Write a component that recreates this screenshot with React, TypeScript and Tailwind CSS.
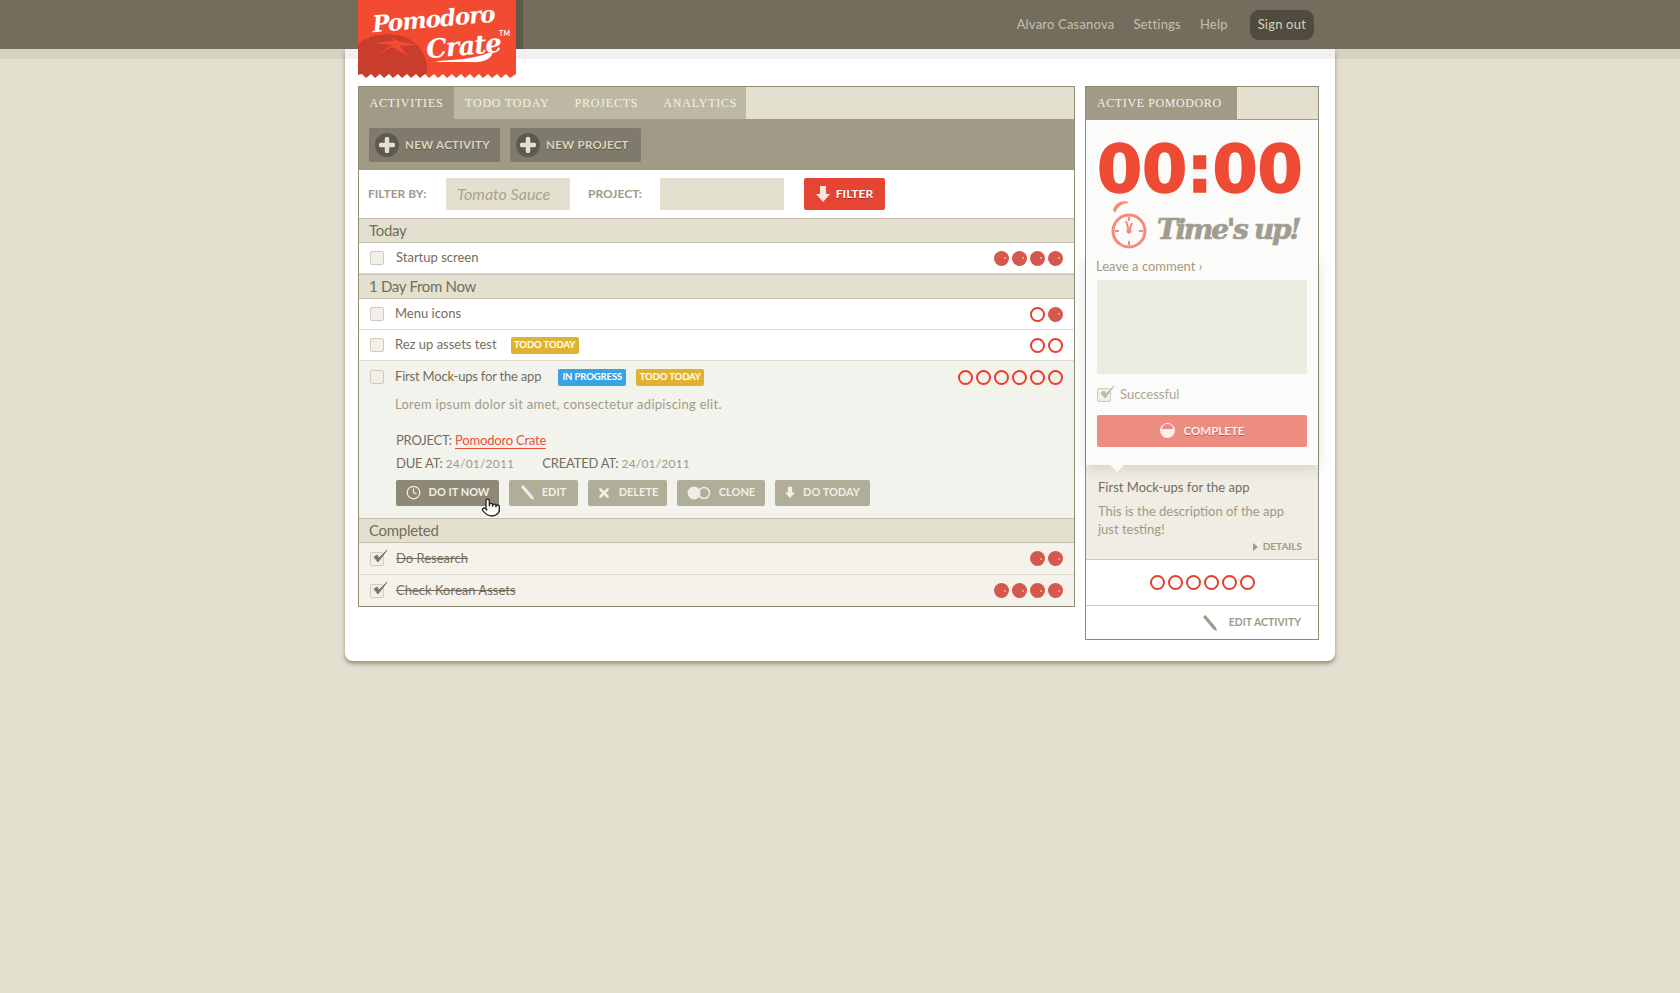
import { Clock, Pointer, X } from "lucide-react";

type TaskRow = {
  title: string;
  filled: number;
  empty: number;
  done?: boolean;
};

function Pomos({ filled, empty }: { filled: number; empty: number }) {
  return (
    <div className="flex gap-[3px]">
      {Array.from({ length: empty }).map((_, i) => (
        <span key={"e" + i} className="w-[15px] h-[15px] rounded-full border-2 border-[#e2402f]" />
      ))}
      {Array.from({ length: filled }).map((_, i) => (
        <span key={"f" + i} className="w-[15px] h-[15px] rounded-full bg-[#d5574d] flex items-center justify-end pr-[3px]">
          <span className="w-[2px] h-[2px] rounded-full bg-[#f0b0a8]" />
        </span>
      ))}
    </div>
  );
}

function Check({ on, muted }: { on?: boolean; muted?: boolean }) {
  const ink = muted ? "#bdbaa9" : "#7d7868";
  return (
    <span className="relative w-[14px] h-[14px] shrink-0 rounded-[2px] border border-[#cfccbd] bg-[#f1efe8]">
      {on && (
        <svg viewBox="0 0 18 18" className="absolute -top-[4px] left-0 w-[18px] h-[18px]">
          <path d="M3 8 L7 13 L16 1 L8 9 L6 6 Z" fill={ink} stroke={ink} strokeWidth="1" />
        </svg>
      )}
    </span>
  );
}

function GroupHeader({ title }: { title: string }) {
  return (
    <div className="h-[25px] flex items-center pl-[10px] bg-[#e3e0cf] border-y border-[#c4c0ad] text-[15px] tracking-[-0.3px] text-[#746d5e]">
      {title}
    </div>
  );
}

function Tag({ color, children }: { color: string; children: string }) {
  return (
    <span className={"w-[68px] h-[17px] flex items-center justify-center rounded-[2px] text-[9.5px] tracking-[-0.1px] font-bold text-white whitespace-nowrap " + color}>
      {children}
    </span>
  );
}

function Row({ task, gap = "gap-[12px]", last, children }: { task: TaskRow; gap?: string; last?: boolean; children?: React.ReactNode }) {
  return (
    <div className={"flex items-center pl-[11px] pr-[11px] " + (last ? "h-[31px] " : "border-b border-[#dcdacd] ") + (task.done ? "bg-[#f4f2ea] " : "bg-white ") + (task.done && !last ? "h-[32px]" : "h-[31px]")}>
      <div className={"flex items-center " + gap}>
        <Check on={task.done} />
        <span className={"text-[13px] text-[#746d5e] " + (task.done ? "line-through" : "")}>{task.title}</span>
      </div>
      {children}
      <div className="ml-auto">
        <Pomos filled={task.filled} empty={task.empty} />
      </div>
    </div>
  );
}

function ActionButton({ label, dark, width, children }: { label: string; dark?: boolean; width: string; children: React.ReactNode }) {
  return (
    <button className={"h-[26px] flex items-center justify-center gap-[8px] rounded-[2px] text-[11px] font-bold text-[#f0efe6] whitespace-nowrap " + width + " " + (dark ? "bg-[#8e8977]" : "bg-[#b0ad99]")}>
      {children}
      {label}
    </button>
  );
}

function ToolbarButton({ label }: { label: string }) {
  return (
    <button className="w-[131px] h-[34px] flex items-center gap-[6px] pl-[6px] rounded-[2px] bg-[#7f7a6c] text-[11.5px] font-bold tracking-[0.3px] text-[#dbd7bd] [text-shadow:0_1px_0_#55513f]">
      <span className="w-[24px] h-[24px] rounded-full bg-[#5e5a4c] flex items-center justify-center">
        <svg viewBox="0 0 16 16" className="w-[16px] h-[16px]">
          <path d="M8 2 V14 M2 8 H14" stroke="#e3e0cf" strokeWidth="4.5" strokeLinecap="round" />
        </svg>
      </span>
      {label}
    </button>
  );
}

function DownArrow({ fill, className }: { fill: string; className: string }) {
  return (
    <svg viewBox="0 0 14 16" className={className}>
      <path d="M4 0 H10 V8 H14 L7 16 L0 8 H4 Z" fill={fill} />
    </svg>
  );
}

function Pencil({ color, className }: { color: string; className: string }) {
  return (
    <svg viewBox="0 0 14 16" className={className}>
      <path d="M0 2 L2.5 0 L13 12.5 L14 16 L10.5 14.5 Z" fill={color} />
    </svg>
  );
}

export default function App() {
  return (
    <div className="min-h-screen bg-[#e3e0cf] [font-family:Lato,sans-serif]">
      <header className="h-[49px] bg-[#746d5e]">
        <div className="relative w-[990px] mx-auto h-full flex items-center justify-end gap-[19px] pr-[21px] text-[13px] tracking-[0.2px] text-[#c4c0ab]">
          <div className="absolute left-[13px] top-0 w-[165px] h-full bg-[#5d5949]" />
          <span>Alvaro Casanova</span>
          <span>Settings</span>
          <span>Help</span>
          <span className="ml-[3px] h-[30px] px-[8px] flex items-center rounded-[9px] bg-[#4f4b3e] text-[#d5d2bf]">Sign out</span>

          <div className="absolute left-[13px] top-0 w-[158px] h-[78px] z-10 overflow-hidden bg-[#f34b32]">
            <svg viewBox="0 0 158 78" className="absolute inset-0 w-full h-full">
              <path d="M0 44 C14 32 44 30 58 44 C72 58 70 72 66 78 H0 Z" fill="#c83d2b" />
              <path d="M14 58 L34 45 L15 43 L36 41 L32 36 L40 41 L60 45 L42 46 L50 56 L34 47 Z" fill="#f34b32" />
              <path d="M77 62 C95 58 110 62 135 51 C134 58 128 63 112 62 C100 62 90 62 77 62 Z" fill="#fff" />
              <path d="M0 78 V75 L4 74 L8 78 L13 74 L17 78 L22 74 L26 78 L31 74 L35 78 L40 74 L44 78 L49 74 L53 78 L58 74 L62 78 L67 74 L71 78 L76 74 L80 78 L85 74 L89 78 L94 74 L98 78 L103 74 L107 78 L112 74 L116 78 L121 74 L125 78 L130 74 L134 78 L139 74 L143 78 L148 74 L152 78 L158 74 V78 Z" fill="#fff" />
            </svg>
            <span className="absolute left-[14px] top-[7px] -rotate-[5deg] [font-family:'DejaVu_Serif',serif] italic font-bold text-[23px] leading-none tracking-[-1px] text-white">Pomodoro</span>
            <span className="absolute left-[68px] top-[33px] -rotate-[5deg] [font-family:'DejaVu_Serif',serif] italic font-bold text-[26px] leading-none tracking-[-1px] text-white">Crate</span>
            <span className="absolute left-[141px] top-[30px] text-[7px] leading-none font-bold text-white">TM</span>
          </div>
        </div>
      </header>
      <div className="h-[10px] bg-[#d6d3c2]" />

      <div className="relative -mt-[10px] w-[990px] mx-auto rounded-b-[8px] bg-white shadow-[0_3px_4px_rgba(90,85,60,0.55)] pb-[21px]">
        <div className="h-[10px] bg-[#f1f1f1]" />
        <div className="flex gap-[10px] pt-[27px] pl-[13px]">
          {/* activities */}
          <main className="w-[717px] self-start border border-[#8f8a74]">
            <nav className="h-[33px] flex bg-[#e3e0cf] [font-family:'Liberation_Serif',serif] text-[12px] tracking-[0.8px] text-[#f4f2e6] whitespace-nowrap">
              <span className="w-[95px] flex items-center justify-center pb-[1px] bg-[#a09a86]">ACTIVITIES</span>
              <div className="w-[292px] flex items-center gap-[25px] pl-[11px] pb-[1px] bg-[#bdb8a3] border-b border-[#a09a86]">
                <span>TODO TODAY</span>
                <span>PROJECTS</span>
                <span>ANALYTICS</span>
              </div>
              <div className="flex-1 border-b border-[#a09a86]" />
            </nav>
            <div className="h-[50px] flex items-center gap-[10px] pl-[10px] bg-[#a09a86]">
              <ToolbarButton label="NEW ACTIVITY" />
              <ToolbarButton label="NEW PROJECT" />
            </div>
            <div className="h-[48px] flex items-center pl-[9px] bg-white text-[12px] font-bold text-[#a09a86]">
              <span className="w-[78px]">FILTER BY:</span>
              <div className="w-[124px] h-[32px] flex items-center pl-[11px] bg-[#e3e0cf] text-[16px] font-normal italic text-[#a8a38f]">Tomato Sauce</div>
              <span className="w-[72px] pl-[18px] box-content">PROJECT:</span>
              <div className="w-[124px] h-[32px] bg-[#e3e0cf]" />
              <button className="ml-[20px] w-[81px] h-[32px] flex items-center justify-center gap-[6px] rounded-[2px] bg-[#e64533] text-white [text-shadow:0_1px_0_#9c2a1c]">
                <DownArrow fill="#fde3dc" className="w-[14px] h-[16px]" />
                FILTER
              </button>
            </div>

            <GroupHeader title="Today" />
            <Row task={{ title: "Startup screen", filled: 4, empty: 0 }} gap="gap-[12px]" />
            <GroupHeader title="1 Day From Now" />
            <Row task={{ title: "Menu icons", filled: 1, empty: 1 }} gap="gap-[11px]" />
            <Row task={{ title: "Rez up assets test", filled: 0, empty: 2 }} gap="gap-[11px]">
              <span className="ml-[14px]">
                <Tag color="bg-[#e0b232]">TODO TODAY</Tag>
              </span>
            </Row>

            <div className="relative h-[157px] pl-[11px] pr-[11px] pt-[8px] bg-[#f3f3ed]">
              <div className="flex items-center h-[16px]">
                <Check />
                <span className="ml-[11px] text-[13px] tracking-[-0.2px] text-[#746d5e]">First Mock-ups for the app</span>
                <span className="ml-[17px] flex gap-[10px]">
                  <Tag color="bg-[#3aa3e3]">IN PROGRESS</Tag>
                  <Tag color="bg-[#e0b232]">TODO TODAY</Tag>
                </span>
                <div className="ml-auto">
                  <Pomos filled={0} empty={6} />
                </div>
              </div>
              <div className="pl-[25px]">
                <p className="mt-[10px] text-[13px] tracking-[0.27px] text-[#a09a86]">Lorem ipsum dolor sit amet, consectetur adipiscing elit.</p>
                <p className="mt-[16px] pl-[1px] text-[13px] tracking-[-0.2px] text-[#746d5e]">
                  PROJECT: <span className="text-[#e8503a] border-b border-[#e8503a]">Pomodoro Crate</span>
                </p>
                <div className="mt-[4px] pl-[1px] flex gap-[28px] text-[13px] tracking-[-0.2px] text-[#746d5e]">
                  <span>DUE AT: <span className="text-[12px] tracking-[0.2px] text-[#a09a86]">24/01/2011</span></span>
                  <span>CREATED AT: <span className="text-[12px] tracking-[0.2px] text-[#a09a86]">24/01/2011</span></span>
                </div>
                <div className="mt-[6px] pl-[1px] flex gap-[10px]">
                  <ActionButton label="DO IT NOW" dark width="w-[103px]">
                    <Clock className="w-[15px] h-[15px]" strokeWidth={2} color="#f0efe6" />
                  </ActionButton>
                  <ActionButton label="EDIT" width="w-[69px]">
                    <Pencil color="#f0efe6" className="w-[13px] h-[15px]" />
                  </ActionButton>
                  <ActionButton label="DELETE" width="w-[79px]">
                    <X className="w-[14px] h-[14px]" strokeWidth={4.5} color="#f0efe6" />
                  </ActionButton>
                  <ActionButton label="CLONE" width="w-[88px]">
                    <svg viewBox="0 0 24 14" className="w-[24px] h-[14px]">
                      <circle cx="7" cy="7" r="6.5" fill="#f0efe6" />
                      <circle cx="17" cy="7" r="5.5" fill="none" stroke="#f0efe6" strokeWidth="1.5" />
                    </svg>
                  </ActionButton>
                  <ActionButton label="DO TODAY" width="w-[95px]">
                    <DownArrow fill="#f0efe6" className="w-[10px] h-[13px]" />
                  </ActionButton>
                </div>
              </div>
              <Pointer className="absolute left-[122px] top-[135px] w-[20px] h-[23px]" fill="#fff" color="#222" strokeWidth={1.6} />
            </div>

            <GroupHeader title="Completed" />
            <Row task={{ title: "Do Research", filled: 2, empty: 0, done: true }} />
            <Row task={{ title: "Check Korean Assets", filled: 4, empty: 0, done: true }} last />
          </main>

          {/* active pomodoro */}
          <aside className="w-[234px] self-start border border-[#8f8a74]">
            <nav className="h-[33px] flex bg-[#e3e0cf] [font-family:'Liberation_Serif',serif] text-[12px] tracking-[0.6px] text-[#f4f2e6] whitespace-nowrap">
              <span className="w-[151px] flex items-center pl-[11px] pb-[1px] bg-[#a09a86]">ACTIVE POMODORO</span>
              <div className="flex-1 border-b border-[#a09a86]" />
            </nav>
            <div className="relative z-20 bg-[#fbfbf9] px-[11px] pt-[16px] h-[138px]">
              <div className="[font-family:'DejaVu_Sans',sans-serif] font-bold text-[65px] leading-[68px] tracking-[-0.3px] text-[#ef4a33] [-webkit-text-stroke:1.5px_#ef4a33] whitespace-nowrap">00:00</div>
              <div className="flex items-start gap-[10px] pl-[14px] -mt-[4px]">
                <svg viewBox="0 0 36 50" className="w-[36px] h-[50px] shrink-0">
                  <path d="M2 10 C4 2 14 -1 18 3 C12 3 7 6 4 13 Z" fill="#f5897b" />
                  <circle cx="18" cy="31" r="16" fill="none" stroke="#f5897b" strokeWidth="3" />
                  <path d="M18 17 V21 M18 41 V45 M4 31 H8 M28 31 H32" stroke="#f5897b" strokeWidth="2" />
                  <path d="M15 21 L18 31 L21 23" fill="none" stroke="#f5897b" strokeWidth="2" />
                  <circle cx="18" cy="31" r="2.5" fill="#f5897b" />
                </svg>
                <span className="mt-[9px] [font-family:'DejaVu_Serif',serif] italic font-bold text-[28px] tracking-[-2.3px] text-[#a09d90] [-webkit-text-stroke:0.7px_#a09d90] whitespace-nowrap">Time's up!</span>
              </div>
            </div>
            <div className="relative z-10 bg-[#fbfbf9] px-[10px] h-[207px] shadow-[0_3px_14px_rgba(60,55,30,0.16)]">
              <p className="text-[13px] leading-[16px] text-[#a09a86]">Leave a comment ›</p>
              <div className="mt-[6px] ml-[1px] mr-[1px] h-[94px] rounded-[2px] bg-[#ecebdf]" />
              <div className="mt-[11px] ml-[1px] flex items-center gap-[9px] text-[13px] text-[#a8a595]">
                <Check on muted />
                Successful
              </div>
              <button className="mt-[10px] ml-[1px] w-[210px] h-[32px] flex items-center justify-center gap-[9px] rounded-[2px] bg-[#ed8c81] text-[11.5px] font-bold text-[#fdf3ef] [text-shadow:0_1px_0_#b75b50]">
                <span className="w-[15px] h-[15px] rounded-full overflow-hidden bg-[#fbeee9] flex flex-col">
                  <span className="h-[5px] bg-[#ed8c81] mx-[2px] mt-[1px] rounded-t-full" />
                </span>
                COMPLETE
              </button>
              <span className="absolute left-[24px] -bottom-[7px] w-0 h-0 border-x-[7px] border-x-transparent border-t-[7px] border-t-[#fbfbf9]" />
            </div>
            <div className="h-[95px] bg-[#efede4] border-b border-[#cfccbd] px-[12px] pt-[13px]">
              <p className="text-[13px] leading-[18px] text-[#746d5e]">First Mock-ups for the app</p>
              <p className="mt-[6px] text-[13px] leading-[18px] text-[#a09a86]">
                This is the description of the app
                <br />
                just testing!
              </p>
              <div className="flex items-center justify-end gap-[5px] pr-[4px] pt-[1px] text-[10px] font-bold text-[#a09a86]">
                <span className="w-0 h-0 border-y-[4px] border-y-transparent border-l-[5px] border-l-[#a09a86]" />
                DETAILS
              </div>
            </div>
            <div className="h-[46px] flex items-center justify-center bg-white border-b border-[#cfccbd]">
              <Pomos filled={0} empty={6} />
            </div>
            <div className="h-[33px] flex items-center justify-end gap-[12px] pr-[17px] bg-white text-[10.5px] font-bold text-[#a09a86]">
              <Pencil color="#a09a86" className="w-[14px] h-[16px]" />
              EDIT ACTIVITY
            </div>
          </aside>
        </div>
      </div>
    </div>
  );
}
